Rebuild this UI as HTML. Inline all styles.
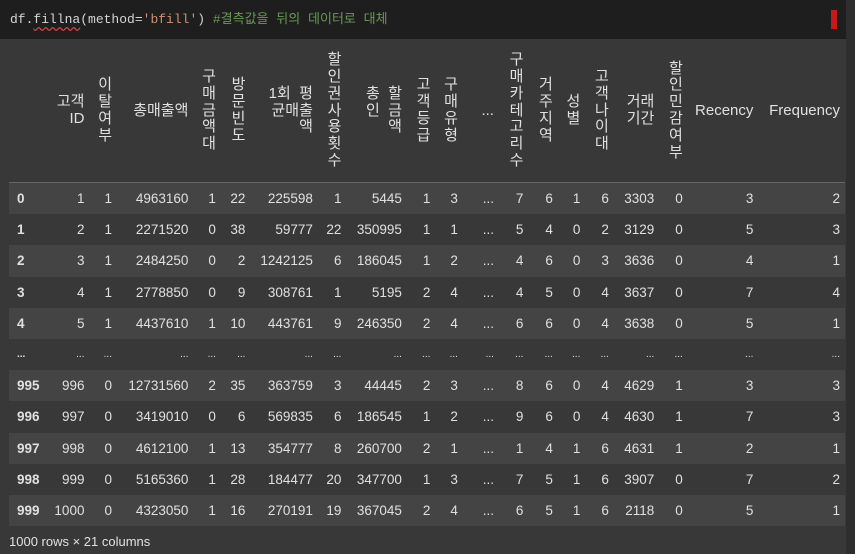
<!DOCTYPE html>
<html><head><meta charset="utf-8"><style>
body{margin:0;width:855px;height:554px;overflow:hidden;background:#383838;font-family:"Liberation Sans","Noto Sans CJK KR",sans-serif;color:#e0e0e0}
#code{position:absolute;left:0;top:0;width:846px;height:39px;background:#1e1e1e;font-family:"Liberation Mono","Noto Sans CJK KR",monospace;font-size:13px;line-height:39px;color:#d4d4d4;white-space:pre}
#code span.t{padding-left:10px}
.s{color:#ce9178}.c{color:#6a9955}
.u{text-decoration:underline wavy #d04040;text-underline-offset:3px}
#mark{position:absolute;left:831px;top:10px;width:6px;height:19px;background:#c41a1a}
#right{position:absolute;left:846px;top:0;width:9px;height:554px;background:#2e2e2e}
#wrap{position:absolute;left:9px;top:40px;width:836px;overflow:hidden}
table{border-collapse:collapse;table-layout:fixed;font-size:13.5px}
th{font-weight:normal;font-size:15px;line-height:16.8px;text-align:right;vertical-align:middle;padding:0 5px 0 0;height:142px;border-bottom:1.5px solid #666;white-space:nowrap;overflow:hidden}
td{height:31.2px;padding:0 5px 0 0;text-align:right;white-space:nowrap;overflow:hidden}
td:first-child{text-align:left;padding-left:8px;font-weight:bold}
tr.l td{background:#444}
.d td{font-size:10px}
#foot{position:absolute;left:9px;top:534px;font-size:13px;color:#e0e0e0}
</style></head><body>
<div id="code"><span class="t">df.<span class="u">fillna</span>(method=<span class="s">'bfill'</span>) <span class="c">#결측값을 뒤의 데이터로 대체</span></span></div>
<div id="mark"></div>
<div id="wrap"><table>
<colgroup><col style="width:41px"><col style="width:40px"><col style="width:28px"><col style="width:77px"><col style="width:28px"><col style="width:30px"><col style="width:68px"><col style="width:29px"><col style="width:61px"><col style="width:29px"><col style="width:28px"><col style="width:37px"><col style="width:30px"><col style="width:30px"><col style="width:28px"><col style="width:29px"><col style="width:46px"><col style="width:29px"><col style="width:71px"><col style="width:87px"></colgroup>
<tr><th></th><th>고객<br>ID</th><th>이<br>탈<br>여<br>부</th><th>총매출액</th><th>구<br>매<br>금<br>액<br>대</th><th>방<br>문<br>빈<br>도</th><th>1회&nbsp;&nbsp;평<br>균매출<br>액</th><th>할<br>인<br>권<br>사<br>용<br>횟<br>수</th><th>총&nbsp;&nbsp;할<br>인&nbsp;&nbsp;금<br>액</th><th>고<br>객<br>등<br>급</th><th>구<br>매<br>유<br>형</th><th>...</th><th>구<br>매<br>카<br>테<br>고<br>리<br>수</th><th>거<br>주<br>지<br>역</th><th>성<br>별</th><th>고<br>객<br>나<br>이<br>대</th><th>거래<br>기간</th><th>할<br>인<br>민<br>감<br>여<br>부</th><th>Recency</th><th>Frequency</th></tr>
<tr class="l"><td>0</td><td>1</td><td>1</td><td>4963160</td><td>1</td><td>22</td><td>225598</td><td>1</td><td>5445</td><td>1</td><td>3</td><td>...</td><td>7</td><td>6</td><td>1</td><td>6</td><td>3303</td><td>0</td><td>3</td><td>2</td></tr>
<tr><td>1</td><td>2</td><td>1</td><td>2271520</td><td>0</td><td>38</td><td>59777</td><td>22</td><td>350995</td><td>1</td><td>1</td><td>...</td><td>5</td><td>4</td><td>0</td><td>2</td><td>3129</td><td>0</td><td>5</td><td>3</td></tr>
<tr class="l"><td>2</td><td>3</td><td>1</td><td>2484250</td><td>0</td><td>2</td><td>1242125</td><td>6</td><td>186045</td><td>1</td><td>2</td><td>...</td><td>4</td><td>6</td><td>0</td><td>3</td><td>3636</td><td>0</td><td>4</td><td>1</td></tr>
<tr><td>3</td><td>4</td><td>1</td><td>2778850</td><td>0</td><td>9</td><td>308761</td><td>1</td><td>5195</td><td>2</td><td>4</td><td>...</td><td>4</td><td>5</td><td>0</td><td>4</td><td>3637</td><td>0</td><td>7</td><td>4</td></tr>
<tr class="l"><td>4</td><td>5</td><td>1</td><td>4437610</td><td>1</td><td>10</td><td>443761</td><td>9</td><td>246350</td><td>2</td><td>4</td><td>...</td><td>6</td><td>6</td><td>0</td><td>4</td><td>3638</td><td>0</td><td>5</td><td>1</td></tr>
<tr class="d"><td>...</td><td>...</td><td>...</td><td>...</td><td>...</td><td>...</td><td>...</td><td>...</td><td>...</td><td>...</td><td>...</td><td>...</td><td>...</td><td>...</td><td>...</td><td>...</td><td>...</td><td>...</td><td>...</td><td>...</td></tr>
<tr class="l"><td>995</td><td>996</td><td>0</td><td>12731560</td><td>2</td><td>35</td><td>363759</td><td>3</td><td>44445</td><td>2</td><td>3</td><td>...</td><td>8</td><td>6</td><td>0</td><td>4</td><td>4629</td><td>1</td><td>3</td><td>3</td></tr>
<tr><td>996</td><td>997</td><td>0</td><td>3419010</td><td>0</td><td>6</td><td>569835</td><td>6</td><td>186545</td><td>1</td><td>2</td><td>...</td><td>9</td><td>6</td><td>0</td><td>4</td><td>4630</td><td>1</td><td>7</td><td>3</td></tr>
<tr class="l"><td>997</td><td>998</td><td>0</td><td>4612100</td><td>1</td><td>13</td><td>354777</td><td>8</td><td>260700</td><td>2</td><td>1</td><td>...</td><td>1</td><td>4</td><td>1</td><td>6</td><td>4631</td><td>1</td><td>2</td><td>1</td></tr>
<tr><td>998</td><td>999</td><td>0</td><td>5165360</td><td>1</td><td>28</td><td>184477</td><td>20</td><td>347700</td><td>1</td><td>3</td><td>...</td><td>7</td><td>5</td><td>1</td><td>6</td><td>3907</td><td>0</td><td>7</td><td>2</td></tr>
<tr class="l"><td>999</td><td>1000</td><td>0</td><td>4323050</td><td>1</td><td>16</td><td>270191</td><td>19</td><td>367045</td><td>2</td><td>4</td><td>...</td><td>6</td><td>5</td><td>1</td><td>6</td><td>2118</td><td>0</td><td>5</td><td>1</td></tr>
</table></div>
<div id="right"></div>
<div id="foot">1000 rows × 21 columns</div>
</body></html>
